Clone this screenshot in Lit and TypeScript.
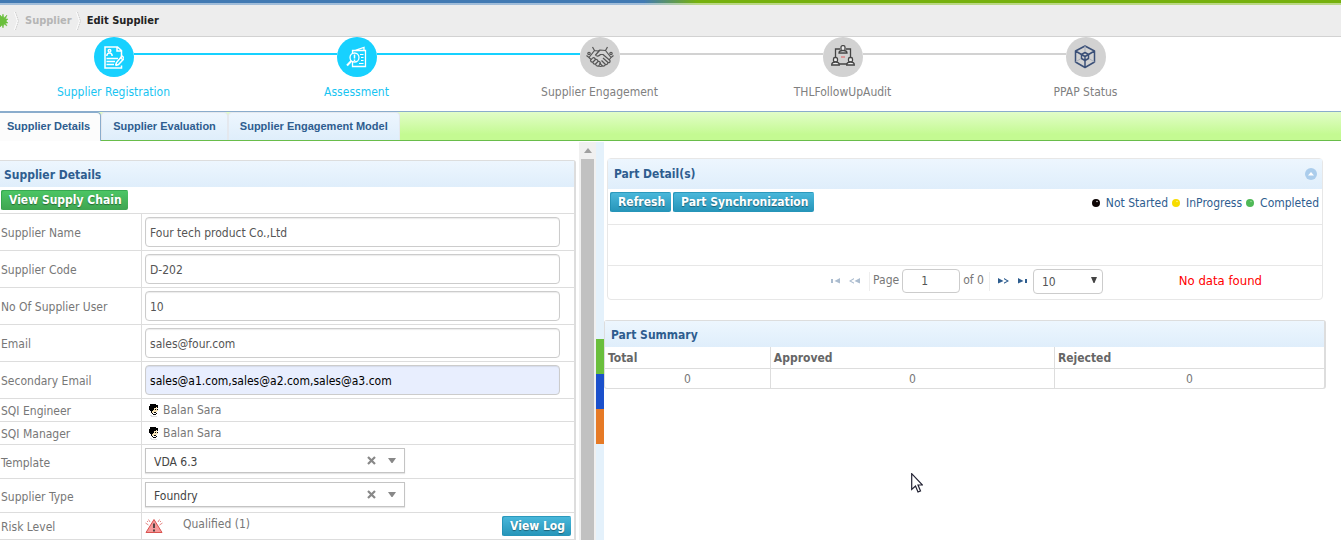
import { LitElement, html, css, svg } from "lit";
import { customElement } from "lit/decorators.js";
import { classMap } from "lit/directives/class-map.js";

const base = css`
  *,
  *::before,
  *::after {
    box-sizing: border-box;
  }
  button,
  input,
  select,
  a {
    font: inherit;
    color: inherit;
    margin: 0;
  }
  a {
    text-decoration: none;
  }
  svg {
    display: block;
    flex: none;
  }
`;

const buttons = css`
  .btn {
    height: 20px;
    padding: 0 6px 0 8px;
    border: 0;
    border-radius: 2px;
    color: #fff;
    font-weight: bold;
    line-height: 20px;
    white-space: nowrap;
    text-shadow: 0 1px 1px rgba(0, 0, 0, 0.4);
    background: linear-gradient(#4bb9dc, #2594b8);
    box-shadow: inset 1px 1px 0 rgba(30, 140, 175, 0.7);
  }
  .btn.green {
    background: linear-gradient(#4cc765, #3fa551);
    box-shadow: inset 1px 1px 0 rgba(50, 160, 75, 0.8);
  }
`;

const icons: Record<string, unknown> = {
  registration: svg`<g fill="none" stroke="#fff" stroke-width="1.5">
    <path d="M17.500 12V4.500L13.500 1H1V22H17.500V19.500M13 1.500V5H17.500"/>
    <circle cx="5.500" cy="4.700" r="1.300"/>
    <path d="M2.800 10C3 7.500 4.500 7 5.500 7C6.500 7 8 7.500 8.200 10M2.500 12.500H14M2.500 15.500H11M2.500 18.500H10M11.500 19.500L12.500 16.500L18 10L20.500 12L14.500 18.500L11.500 19.500M16.500 11.500L19 14"/></g>`,
  assessment: svg`<g fill="none" stroke="#fff" stroke-width="1.3">
    <path d="M7 5L18 1.500V4M6.500 7V4.500H19.500V20.500H6.500V16"/>
    <circle cx="8.500" cy="11.500" r="4.500"/>
    <path d="M5.500 14.700L1 19.500" stroke-width="2"/>
    <path d="M8.500 8.500V12.500M8.500 13.500V15" stroke-width="1.500"/>
    <path d="M14 8.500H17.500M15 11.500H17.500M15 14.500H17.500M13 17.500H17.500" stroke-width="1"/></g>`,
  engagement: svg`<g fill="none" stroke="#555" stroke-width="1.200" stroke-linejoin="round">
    <path d="M6.500 1L8.500 4.500L3 11.500L0.500 9.500M21.500 1L19.500 4.500L25 11.500L27.500 9.500M8.500 4.500L12 5L14 4L19.500 4.500M14 4L9.500 9Q11.500 11.500 14.500 8.500L17 8.500L24 14.500Q24.500 17 22 16.500M3 11.500L5 13.500M17 12L22 16.500Q21.500 19 19.500 18.500L15.500 14.500M19.500 18.500Q18.500 20.500 16.500 20L13.500 17M25 11.500L23 14"/>
    <path d="M6.500 12L4.500 14.500Q5 16.500 7 16L9.500 13.500Q8.500 11 6.500 12M7 16Q7 18.500 9.500 18L12 15.500Q11.500 13 9.500 13.500M9.500 18Q10 20.500 12.500 20L14.500 17.500Q14 15 12 15.500M12.500 20L14.500 20.500L16.500 20"/>
    <circle cx="3" cy="7.500" r="1.200"/><circle cx="25" cy="7.500" r="1.200"/></g>`,
  audit: svg`<g fill="none" stroke="#444" stroke-width="1.300">
    <path d="M9 4H4.500V12M15 4H19.500V12M8 19H16"/>
    <g fill="#eee"><rect x="10" y="0.700" width="4" height="5" rx="1.500"/><path d="M8 8Q8 5.500 12 5.500T16 8Z"/>
    <rect x="2.500" y="12.500" width="4" height="4.500" rx="1.500"/><path d="M0.700 20Q0.700 17 4.500 17T8.300 20Z"/>
    <rect x="17.500" y="12.500" width="4" height="4.500" rx="1.500"/><path d="M15.700 20Q15.700 17 19.500 17T23.300 20Z"/></g>
    <path d="M10 12H14" stroke="#d77"/></g>`,
  cube: svg`<g fill="none" stroke="#3b5078" stroke-width="1.500" stroke-linejoin="round">
    <path d="M11 1L20.500 6V17L11 22.500L1.500 17V6ZM1.500 6L7.500 9.500M20.500 6L14.500 9.500M11 15.500V22.500"/>
    <path d="M11 7.500L14.500 9.500V13.500L11 15.500L7.500 13.500V9.500ZM11 11.500V15.500M7.500 9.500L11 11.500L14.500 9.500"/>
    <path d="M11 1V7M1.500 17L7 13.500M20.500 17L15 13.500" stroke="#a9afbc" stroke-width="1"/></g>`,
};

interface Step {
  label: string;
  icon: string;
  w: number;
  h: number;
  done: boolean;
}

@customElement("progress-steps")
class ProgressSteps extends LitElement {
  static styles = [
    base,
    css`
      :host {
        display: block;
      }
      .steps {
        display: grid;
        grid-template-columns: repeat(5, 1fr);
        list-style: none;
        margin: 0 0 0 -8px;
        padding: 0 134px 0 0;
      }
      .step {
        display: grid;
        grid-template-columns: 1fr 40px 1fr;
        color: #808080;
        text-align: center;
      }
      .line {
        height: 2px;
        margin-top: 16px;
        background: #d2d2d2;
      }
      .line.on {
        background: #17d1ff;
      }
      .line.none {
        background: none;
      }
      .dot {
        display: grid;
        place-items: center;
        height: 40px;
        border-radius: 50%;
        background: #d2d2d2;
      }
      .done .dot {
        background: #17d1ff;
      }
      .done {
        color: #17c4f2;
      }
      .label {
        grid-column: 1 / -1;
        margin-top: 7px;
        line-height: 16px;
        padding-bottom: 11px;
      }
    `,
  ];
  steps: Step[] = [
    { label: "Supplier Registration", icon: "registration", w: 20, h: 23, done: true },
    { label: "Assessment", icon: "assessment", w: 21, h: 22, done: true },
    { label: "Supplier Engagement", icon: "engagement", w: 28, h: 22, done: false },
    { label: "THLFollowUpAudit", icon: "audit", w: 24, h: 24, done: false },
    { label: "PPAP Status", icon: "cube", w: 24, h: 24, done: false },
  ];
  render() {
    const s = this.steps;
    return html`<ol class="steps">
      ${s.map(
        (p, i) => html`<li class=${classMap({ step: true, done: p.done })}>
          <span class=${classMap({ line: true, none: i === 0, on: i > 0 && s[i - 1].done })}></span>
          <span class="dot"><svg width=${p.w} height=${p.h} viewBox="0 0 ${p.w} ${p.h}">${icons[p.icon]}</svg></span>
          <span class=${classMap({ line: true, none: i === s.length - 1, on: p.done })}></span>
          <a class="label" href="#">${p.label}</a>
        </li>`
      )}
    </ol>`;
  }
}

const person = svg`<path d="M2 0H8V1H10V4H9V3H8V4H6V6H5V7H4V9H3V7H2V6H1V2H2Z" fill="#000"/>
  <path d="M6 4H8V3H9V5H10V7H9V8H8V9H5V10H4V7H5V6H6Z" fill="#f6e3b8"/>
  <path d="M7 5H8V6H7ZM9 5H10V6H9ZM6 8H8V9H6ZM4 9H5V10H8V9H9V10H8V11H5V10H4Z" fill="#000"/>
  <path d="M2 11H4V12H9V13H3V12H2Z" fill="#ddd"/>`;

@customElement("supplier-form")
class SupplierForm extends LitElement {
  static styles = [
    base,
    buttons,
    css`
      :host {
        display: block;
        padding-top: 18px;
      }
      .panel {
        margin-right: 3px;
        border: solid #ddd;
        border-width: 1px 2px 0 0;
        border-radius: 0 3px 0 0;
      }
      h2 {
        margin: 0;
        padding: 1px 4px 0;
        height: 26px;
        font-size: 12px;
        line-height: 26px;
        color: #2e5d8f;
        background: linear-gradient(#edf6fe, #dfeefb);
      }
      .tools {
        padding: 3px 1px;
        height: 26px;
      }
      .row {
        display: grid;
        grid-template-columns: 141px 1fr;
        border-top: 1px solid #ddd;
        min-height: 37px;
      }
      .row.user {
        min-height: 23px;
      }
      .row.pick {
        min-height: 34px;
      }
      .row.risk {
        min-height: 27px;
      }
      .row.end {
        min-height: 24px;
      }
      .name {
        padding: 2px 0 0 1px;
        align-self: center;
        color: #777;
      }
      .cell {
        display: flex;
        align-items: center;
        border-left: 1px solid #ddd;
        padding: 0 3px;
        color: #777;
      }
      .text {
        width: 100%;
        height: 30px;
        margin-right: 11px;
        padding: 2px 4px 0;
        border: 1px solid #ccc;
        border-radius: 4px;
        color: #555;
        background: #fff;
        box-shadow: inset 0 1px 1px rgba(0, 0, 0, 0.08);
      }
      .text.filled {
        background: #e8eefe;
        color: #000;
      }
      .person {
        display: flex;
        align-items: center;
        gap: 4px;
        padding-left: 3px;
      }
      .combo {
        display: grid;
        grid-template-columns: 1fr 37px;
        width: 260px;
        height: 25px;
        margin-bottom: 2px;
        border: 1px solid #c4c4c4;
        background: #fff;
        box-shadow: 0 1px 1px rgba(0, 0, 0, 0.1);
      }
      .combo select {
        grid-area: 1 / 1 / 2 / 3;
        appearance: none;
        padding: 2px 8px 0;
        border: 0;
        background: none;
        color: #444;
      }
      .tips {
        grid-area: 1 / 2;
        display: flex;
        align-items: center;
        gap: 12px;
      }
      .clear {
        border: 0;
        padding: 0;
        background: none;
      }
      .level {
        margin: 0 auto 4px 20px;
      }
    `,
  ];
  fields = [
    { id: "name", label: "Supplier Name", value: "Four tech product Co.,Ltd" },
    { id: "code", label: "Supplier Code", value: "D-202" },
    { id: "users", label: "No Of Supplier User", value: "10" },
    { id: "email", label: "Email", value: "sales@four.com" },
    { id: "email2", label: "Secondary Email", value: "sales@a1.com,sales@a2.com,sales@a3.com", filled: true },
  ];
  combos = [
    { id: "template", label: "Template", value: "VDA 6.3" },
    { id: "type", label: "Supplier Type", value: "Foundry" },
  ];
  render() {
    return html`<section class="panel">
      <h2>Supplier Details</h2>
      <div class="tools"><button class="btn green">View Supply Chain</button></div>
      ${this.fields.map(
        (f) => html`<div class="row">
          <label class="name" for=${f.id}>${f.label}</label>
          <div class="cell">
            <input id=${f.id} class=${classMap({ text: true, filled: !!f.filled })} .value=${f.value} />
          </div>
        </div>`
      )}
      ${["SQI Engineer", "SQI Manager"].map(
        (l) => html`<div class="row user">
          <span class="name">${l}</span>
          <div class="cell">
            <span class="person"><svg width="11" height="13" viewBox="0 0 11 13" shape-rendering="crispEdges">${person}</svg>Balan Sara</span>
          </div>
        </div>`
      )}
      ${this.combos.map(
        (c) => html`<div class="row pick">
          <label class="name" for=${c.id}>${c.label}</label>
          <div class="cell">
            <div class="combo">
              <select id=${c.id}><option>${c.value}</option></select>
              <div class="tips">
                <button class="clear" aria-label="Clear">
                  <svg width="9" height="9" viewBox="0 0 9 9"><path d="M1 1L8 8M8 1L1 8" stroke="#888" stroke-width="2.2" /></svg>
                </button>
                <svg width="8" height="5" viewBox="0 0 8 5"><path d="M0 0H8L4.500 5H3.500Z" fill="#888" /></svg>
              </div>
            </div>
          </div>
        </div>`
      )}
      <div class="row risk">
        <span class="name">Risk Level</span>
        <div class="cell">
          <svg width="18" height="16" viewBox="0 0 18 16">
            <path d="M9 1.500L17 14.500H1Z" fill="#f79a9a" stroke="#d9534f" stroke-width="1" stroke-linejoin="round" />
            <path d="M9 5.500V10M9 11.500V13.500" stroke="#544" stroke-width="2" />
            <path d="M5 4L3.500 1.500M3.500 7L0.500 5M13 4L14.500 1.500M14.500 7L17.500 5M2 3L3 4M16 3L15 4" stroke="#e58a88" stroke-width="1" />
          </svg>
          <span class="level">Qualified (1)</span>
          <button class="btn">View Log</button>
        </div>
      </div>
      <div class="row end"></div>
    </section>`;
  }
}

@customElement("part-panels")
class PartPanels extends LitElement {
  static styles = [
    base,
    buttons,
    css`
      :host {
        display: block;
        padding-top: 16px;
      }
      .box {
        margin: 0 18px 20px 3px;
        border: 1px solid #e7e7e7;
        border-radius: 4px;
      }
      .head {
        display: flex;
        justify-content: space-between;
        align-items: center;
        height: 30px;
        padding: 0 5px 0 6px;
        color: #2e5d8f;
        background: linear-gradient(#edf6fe, #dfeefb);
      }
      h2 {
        margin: 0;
        font-size: 12px;
      }
      .fold {
        padding: 0;
        border: 0;
        background: none;
      }
      .bar {
        display: flex;
        align-items: flex-start;
        gap: 2px;
        height: 36px;
        padding: 3px 3px 0 2px;
        border-bottom: 1px solid #e7e7e7;
      }
      .legend {
        display: flex;
        gap: 4px;
        list-style: none;
        margin: 0 0 0 auto;
        padding: 1px 0 0;
        line-height: 20px;
        color: #2e5d8f;
      }
      .legend li {
        display: flex;
        align-items: center;
        gap: 6px;
      }
      .void {
        height: 41px;
        border-bottom: 1px solid #e7e7e7;
      }
      .pager {
        display: grid;
        grid-template-columns: 1fr auto 1fr;
        align-items: center;
        height: 33px;
        color: #777;
      }
      .nav {
        grid-column: 2;
        display: flex;
        align-items: center;
        margin-left: 4px;
        padding-bottom: 3px;
      }
      .go {
        padding: 0;
        border: 0;
        background: none;
        color: #2e5d8f;
        margin-right: 9px;
      }
      .go:disabled {
        color: #abbccf;
      }
      .pg {
        display: flex;
        align-items: center;
        gap: 3px;
        height: 19px;
        padding: 0 5px 2px 3px;
        border: solid #eee;
        border-width: 0 1px;
        margin-right: 8px;
      }
      .num,
      .size {
        border: 1px solid #ccc;
        border-radius: 4px;
        color: #555;
        background: #fff;
      }
      .num {
        width: 58px;
        height: 24px;
        padding: 0 16px 0 18px;
        margin-top: 2px;
      }
      .pickbox {
        display: grid;
        align-items: center;
        width: 70px;
      }
      .size {
        grid-area: 1 / 1;
        appearance: none;
        height: 25px;
        padding: 2px 8px 0;
      }
      .arrow {
        grid-area: 1 / 1;
        justify-self: end;
        margin: 0 6px 2px 0;
      }
      .go.last {
        margin-right: 6px;
      }
      .none {
        justify-self: end;
        padding: 0 60px 3px 0;
        font-size: 13px;
        color: #f00;
      }
      .sum {
        margin-right: 15px;
        border: solid #ddd;
        border-width: 1px 2px 1px 1px;
        border-radius: 3px;
      }
      .sum .head {
        height: 26px;
        padding-top: 2px;
      }
      table {
        width: 100%;
        border-collapse: collapse;
        table-layout: fixed;
        color: #666;
      }
      th,
      td {
        height: 21px;
        padding: 2px 3px 0;
        border-left: 1px solid #ddd;
      }
      th:first-child,
      td:first-child {
        border-left: 0;
      }
      th {
        text-align: left;
        border-bottom: 1px solid #ddd;
      }
      td {
        height: 20px;
        text-align: center;
        color: #777;
      }
      .c1 {
        width: 23%;
      }
      .c3 {
        width: 37.5%;
      }
    `,
  ];
  legend = [
    ["Not Started", "#0d0505", "#fff"],
    ["InProgress", "#f7dc00", "#fff6a0"],
    ["Completed", "#4fb957", "#a5e3a5"],
  ];
  go(label: string, off: boolean, w: number, d: string, cls = "") {
    return html`<button class="go ${cls}" aria-label=${label} ?disabled=${off}>
      <svg width=${w} height="6" viewBox="0 0 ${w} 6">
        <path d=${d} fill="currentColor" />
      </svg>
    </button>`;
  }
  render() {
    return html`
      <section class="box">
        <div class="head">
          <h2>Part Detail(s)</h2>
          <button class="fold" aria-label="Collapse">
            <svg width="12" height="12" viewBox="0 0 12 12"><circle cx="6" cy="6" r="6" fill="#abcdec" /><path d="M3 7.500L6 4L9 7.500Z" fill="#fff" /></svg>
          </button>
        </div>
        <div class="bar">
          <button class="btn">Refresh</button>
          <button class="btn">Part Synchronization</button>
          <ul class="legend">
            ${this.legend.map(
              ([t, c, hi]) => html`<li>
                <svg width="8" height="8" viewBox="0 0 8 8"><circle cx="4" cy="4" r="4" fill=${c} /><circle cx="5" cy="2.500" r="0.700" fill=${hi} /></svg>${t}
              </li>`
            )}
          </ul>
        </div>
        <div class="void"></div>
        <div class="pager">
          <div class="nav">
            ${this.go("First page", true, 9, "M0 1H2V5H0ZM9 0V5.500L3.500 3Z")}
            ${this.go("Previous page", true, 11, "M11 0V5.500L5.500 3ZM5 0V1.200L2 3L5 4.500V5.700L0 3Z")}
            <div class="pg">
              <label for="page">Page</label>
              <input id="page" class="num" .value=${"1"} />
              <span>of 0</span>
            </div>
            ${this.go("Next page", false, 11, "M0 0V5.500L5.500 3ZM6 0V1.200L9 3L6 4.500V5.700L11 3Z")}
            ${this.go("Last page", false, 9, "M9 1H7V5H9ZM0 0V5.500L5.500 3Z", "last")}
            <div class="pickbox">
              <select class="size" aria-label="Rows per page"><option>10</option></select>
              <svg class="arrow" width="6" height="6" viewBox="0 0 6 6"><path d="M0 0H6L3.500 6H2.500Z" fill="#444" /></svg>
            </div>
          </div>
          <span class="none">No data found</span>
        </div>
      </section>
      <section class="sum">
        <div class="head"><h2>Part Summary</h2></div>
        <table>
          <thead>
            <tr><th class="c1">Total</th><th>Approved</th><th class="c3">Rejected</th></tr>
          </thead>
          <tbody>
            <tr><td>0</td><td>0</td><td>0</td></tr>
          </tbody>
        </table>
      </section>
    `;
  }
}

@customElement("app-root")
class AppRoot extends LitElement {
  static styles = [
    base,
    css`
      :host {
        display: flex;
        flex-direction: column;
        position: relative;
        height: 100vh;
        overflow: hidden;
        background: #fff;
        font: 12px/16px "DejaVu Sans Condensed", "DejaVu Sans", Tahoma, sans-serif;
      }
      .stripe {
        flex: none;
        height: 5px;
        background: linear-gradient(transparent 60%, rgba(255, 255, 255, 0.5) 60%),
          linear-gradient(90deg, #427ab3 48%, #76b10d 52%);
      }
      .crumbs {
        flex: none;
        display: flex;
        align-items: center;
        height: 32px;
        border-bottom: 1px solid #d2d2d2;
        background: #ededed;
        color: #b5b5b5;
        font-weight: bold;
        font-size: 11px;
      }
      .home {
        margin-right: 6px;
      }
      .crumbs a {
        margin: 0 4px 0 6px;
      }
      .crumbs .here {
        margin-left: 6px;
        color: #222;
      }
      .tabs {
        flex: none;
        display: flex;
        height: 30px;
        border-top: 1px solid #8aaccc;
        border-bottom: 1px solid #69bd4a;
        background: linear-gradient(#e2fdc8, #c4fa92 80%);
        font: bold 11px/28px "Liberation Sans", Arial, sans-serif;
        color: #2e5d8f;
      }
      .tab {
        border: 1px solid #e4e8ee;
        border-width: 1px 1px 0;
        border-radius: 4px 4px 0 0;
        padding: 0 11px;
        line-height: 27px;
        background: linear-gradient(#edf6fe, #dfeefb);
      }
      .tab.on {
        height: 29px;
        padding: 0 10px 0 7px;
        border-color: #8aaccc;
        border-width: 1px 1px 0 0;
        border-radius: 0 4px 0 0;
        background: #fcfcfc;
      }
      .split {
        flex: 1;
        min-height: 0;
        display: grid;
        grid-template-columns: 596fr 8px 737fr;
        grid-template-rows: 100%;
        padding-top: 1px;
      }
      .left {
        display: grid;
        grid-template-columns: 1fr 17px;
        overflow: hidden;
      }
      .scroll {
        display: grid;
        grid-template-rows: 17px 1fr;
        justify-items: center;
        align-items: center;
        padding: 0 2px;
        background: #f0f0f0;
      }
      .thumb {
        width: 13px;
        height: 100%;
        background: #c1c1c1;
      }
      .bar {
        padding-top: 197px;
        background: #e4f1fb;
      }
      .mark {
        height: 35px;
      }
      .mark.green {
        background: #6abf3c;
      }
      .mark.blue {
        background: #1b50cb;
      }
      .mark.orange {
        background: #e67a26;
      }
      .pointer {
        position: absolute;
        left: 911px;
        top: 473px;
      }
    `,
  ];
  sep() {
    return html`<svg width="5" height="18" viewBox="0 0 5 18" fill="none">
      <path d="M0.500 0L3.500 9L0.500 18" stroke="#fff" />
      <path d="M1.500 0L4.500 9L1.500 18" stroke="#ccc" stroke-dasharray="1.5 1" />
    </svg>`;
  }
  render() {
    return html`
      <div class="stripe"></div>
      <nav class="crumbs">
        <svg class="home" width="8" height="14" viewBox="0 0 8 14">
          <path d="M0 1L2 3L3 0L4 4L7 1L5.500 5L8 5L6 7L8 9L5.500 9L7 12L4 10L3 14L2 11L0 13Z" fill="#6abf3c" stroke="#6abf3c" stroke-width="0.500" />
        </svg>
        ${this.sep()}<a href="#">Supplier</a>${this.sep()}<span class="here">Edit Supplier</span>
      </nav>
      <progress-steps></progress-steps>
      <nav class="tabs">
        <a class="tab on" href="#">Supplier Details</a>
        <a class="tab" href="#">Supplier Evaluation</a>
        <a class="tab" href="#">Supplier Engagement Model</a>
      </nav>
      <main class="split">
        <div class="left">
          <supplier-form></supplier-form>
          <div class="scroll">
            <svg width="8" height="5" viewBox="0 0 8 5"><path d="M0 5L4 0L8 5Z" fill="#a0a0a0" /></svg>
            <div class="thumb"></div>
          </div>
        </div>
        <div class="bar">
          <div class="mark green"></div>
          <div class="mark blue"></div>
          <div class="mark orange"></div>
        </div>
        <part-panels></part-panels>
      </main>
      <svg class="pointer" width="12" height="20" viewBox="0 0 12 20">
        <path d="M0.700 0.700V16.500L4.500 13L7 19L9.500 18L7 12H11.500Z" fill="#fff" stroke="#223" stroke-width="1.200" />
      </svg>
    `;
  }
}
